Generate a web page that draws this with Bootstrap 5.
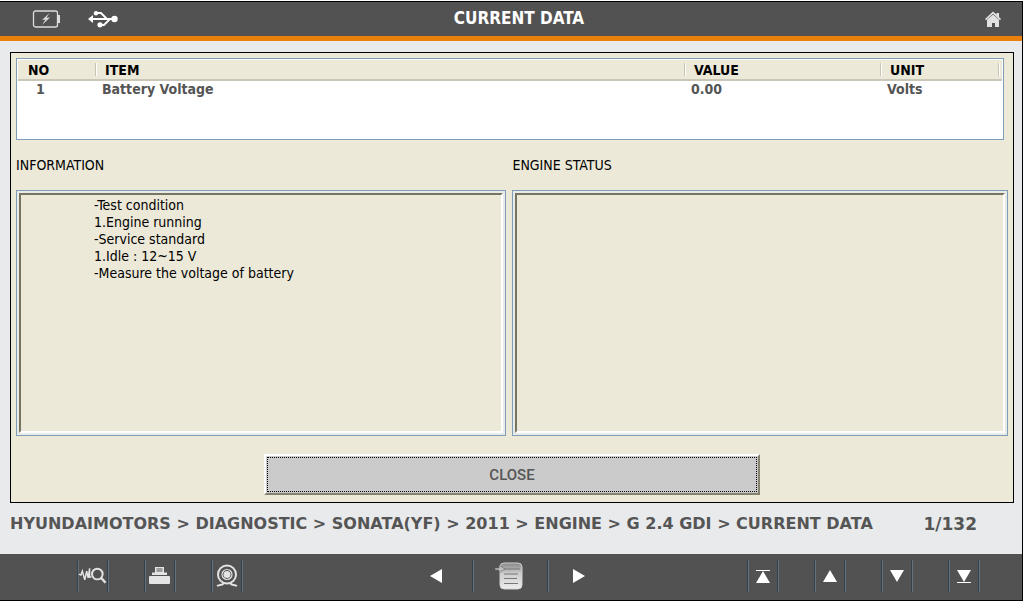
<!DOCTYPE html>
<html lang="en">
<head>
<meta charset="utf-8">
<meta name="viewport" content="width=device-width, initial-scale=1">
<title>Current Data</title>
<link href="https://cdn.jsdelivr.net/npm/bootstrap@5.3.0/dist/css/bootstrap.min.css" rel="stylesheet">
<style>
  :root { --bar: #525252; --sand: #ece9d8; --ink: #555; }
  body { background: #fff; font-family: "DejaVu Sans Condensed", "DejaVu Sans", sans-serif; font-size: 14px; line-height: 17px; color: #000; }
  .app-window { background: #e9eaec; border: solid #000; border-width: 1px 1px 1px 0; margin: 1px 1px 0 0; min-height: calc(100vh - 1px); }
  .title-bar { background: var(--bar); border-bottom: 5px solid #ea7f0b; height: 39px; padding: 0 20px 0 32px; }
  .three-part { display: grid; grid-template-columns: 1fr auto 1fr; align-items: center; }
  .title-bar h1 { font-size: 17px; line-height: 20px; color: #fff; padding: 0 0 3px 4px; }
  .main-panel { background: var(--sand); border: 1px solid #000; margin: 11px 8px 0 10px; padding: 5px 5px 7px; }
  .data-box { background: #fff; border: 1px solid #7f9db9; height: 82px; margin-right: 4px; padding: 1px; }
  .data-grid { table-layout: fixed; font-weight: bold; color: var(--ink); }
  .data-grid th { position: relative; background: var(--sand); color: #000; height: 20px; padding: 1px 10px 0; border-bottom: 2px solid #cbc7b8; }
  .data-grid th + th::before { content: ""; position: absolute; left: 0; top: 3px; height: 13px; border-left: 1px solid #c7c5b2; border-right: 1px solid #fff; }
  .data-grid td { padding: 0 7px; }
  .data-grid td:first-child { padding-left: 18px; }
  .col-no { width: 77px; } .col-value { width: 196px; } .col-unit { width: 118px; } .col-end { width: 4px; }
  .status-grid { display: grid; grid-template-columns: 98fr 99fr; gap: 6px; }
  .section-title { font-size: 14px; line-height: 18px; margin: 16px 0; }
  .sunken { border: 1px solid #7f9db9; padding: 2px; background: #e9ece6; }
  .sunken > div { background: var(--sand); border: 2px solid; border-color: #77755f #fff #fff #77755f; padding: 2px 8px 2px 73px; }
  .close-btn { width: 496px; max-width: 100%; height: 41px; margin-top: 18px; padding: 1px; border: 2px solid; border-color: #fff #85826f #85826f #fff; background: #cbcbcb; color: var(--ink); font: 500 15px Roboto, sans-serif; }
  .close-btn span { display: flex; align-items: center; justify-content: center; height: 100%; border: 1px dotted #000; }
  .trail { font: bold 16px/20px "DejaVu Sans", sans-serif; color: var(--ink); padding: 11px 45px 20px 10px; }
  .trail .count { font-size: 17px; }
  .tool-bar { background: var(--bar); height: 46px; padding-bottom: 2px; }
  .tool-bar button { background: none; border: 0; padding: 0; height: 32px; display: grid; place-items: center; }
  .tool-bar .ruled { border: solid #34424d; border-width: 0 1px; box-shadow: inset 1px 0 #66717a, 1px 0 #66717a; }
  .tool { width: 31px; }
  .tools { gap: 36px; }
  .tools-left { padding-left: 77px; }
  .tools-right { padding-right: 43px; }
  .pager { margin-right: 12px; }
  .prev-page { width: 72px; }
  .next-page { width: 62px; }
  .note { width: 76px; }
  svg { display: block; }
</style>
</head>
<body>
<div class="app-window d-flex flex-column">
  <header class="title-bar three-part">
    <div class="d-flex align-items-center">
      <svg width="28" height="18" viewBox="0 0 28 18" fill="none" stroke="#ddd" role="img" aria-label="Battery"><rect x="1.5" y="1" width="24" height="16" rx="2" stroke-width="1.3"/><path d="M27 5v8" stroke-width="2"/><path d="M17.500 3l-7.500 7 3.500-.5-3.500 5.500 8-7.500-3.500.3z" fill="#ddd" stroke="none"/></svg>
      <svg class="ms-4 ps-1" width="34" height="18" viewBox="0 0 30 18" role="img" aria-label="USB" fill="none" stroke="#fff" stroke-width="1.800"><path d="M3 9h23M8 3h5l6 6M12 15h4l6-6"/><path d="M0 9l5-4v8z" fill="#fff" stroke="none"/><g fill="#fff" stroke="none"><circle cx="26.500" cy="9" r="3.200"/><circle cx="8" cy="3.200" r="2.200"/><circle cx="12" cy="14.800" r="2.600"/></g></svg>
    </div>
    <h1 class="fw-bold mb-0">CURRENT DATA</h1>
    <a href="#" class="ms-auto" aria-label="Home"><svg width="18" height="18" viewBox="0 0 18 18" fill="#e2e2e2"><path d="M1 9L9 1.500l3.500 3V3H15v4l2 2-1 1.200-7-6.400-7 6.400z"/><path d="M3 9.800l6-5.300 6 5.300V17h-4v-4H8v4H3z"/></svg></a>
  </header>

  <main class="main-panel flex-grow-1 d-flex flex-column">
    <div class="data-box">
      <table class="data-grid w-100">
        <colgroup><col class="col-no"><col><col class="col-value"><col class="col-unit"><col class="col-end"></colgroup>
        <thead><tr><th>NO</th><th>ITEM</th><th>VALUE</th><th>UNIT</th><th class="px-0"></th></tr></thead>
        <tbody><tr><td>1</td><td>Battery Voltage</td><td>0.00</td><td>Volts</td><td class="p-0"></td></tr></tbody>
      </table>
    </div>
    <div class="status-grid flex-grow-1">
      <section class="d-flex flex-column">
        <h2 class="section-title fw-normal">INFORMATION</h2>
        <div class="sunken flex-grow-1 d-flex"><div class="flex-grow-1">-Test condition<br>1.Engine running<br>-Service standard<br>1.Idle : 12~15 V<br>-Measure the voltage of battery</div></div>
      </section>
      <section class="d-flex flex-column">
        <h2 class="section-title fw-normal">ENGINE STATUS</h2>
        <div class="sunken flex-grow-1 d-flex"><div class="flex-grow-1"></div></div>
      </section>
    </div>
    <button type="button" class="close-btn align-self-center"><span>CLOSE</span></button>
  </main>

  <div class="trail d-flex justify-content-between">
    <nav aria-label="Breadcrumb">HYUNDAIMOTORS &gt; DIAGNOSTIC &gt; SONATA(YF) &gt; 2011 &gt; ENGINE &gt; G 2.4 GDI &gt; CURRENT DATA</nav>
    <span class="count">1/132</span>
  </div>

  <footer class="tool-bar three-part">
    <div class="tools tools-left d-flex">
      <button type="button" class="tool ruled" aria-label="Analyse"><svg width="29" height="20" viewBox="0 0 30 20" fill="none" stroke="#e4e4e4" stroke-width="1.500"><path d="M1 8l2 1 1.500-4L7 14l2-9 1.500 7L12 2v9h2"/><circle cx="20" cy="8" r="5.500" stroke-width="2"/><path d="M24 12l4.500 5" stroke-width="2.500"/></svg></button>
      <button type="button" class="tool ruled" aria-label="Print"><svg width="21" height="20" viewBox="0 0 21 20" fill="#e4e4e4"><path d="M6 1h9v6H6z"/><path d="M7.500 3h6M7.500 5h6" stroke="#525252"/><path d="M3 6.500h15V9H3z"/><rect x="0" y="10" width="21" height="8" rx="1"/></svg></button>
      <button type="button" class="tool ruled" aria-label="Camera"><svg width="24" height="24" viewBox="0 0 24 24" fill="none" stroke="#e4e4e4" stroke-width="2"><circle cx="12" cy="10.500" r="9"/><circle cx="12" cy="10.500" r="5" stroke-width="1.200"/><circle cx="12" cy="10.500" r="3.500" fill="#e4e4e4" stroke="none"/><path d="M2 22c3-2 5 0 7-3M22 22c-3-2-5 0-7-3"/></svg></button>
    </div>
    <div class="pager d-flex">
      <button type="button" class="prev-page" aria-label="Previous"><svg width="12" height="14" fill="#fff"><path d="M12 0v14L0 7z"/></svg></button>
      <button type="button" class="note ruled" aria-label="Notes"><svg width="30" height="30" viewBox="0 0 30 30"><defs><linearGradient id="sheet" x2="0" y2="1"><stop stop-color="#888"/><stop offset=".4" stop-color="#ccc"/><stop offset="1" stop-color="#eee"/></linearGradient></defs><rect x="5" y="2" width="22" height="26" rx="4" fill="url(#sheet)" stroke="#d0d0d0"/><path d="M9 8h16M9 13h14M9 17.500h13M9 22.500h14" stroke="#777"/><path d="M0 7h4V4l6 4-6 4V9H0z" fill="#bbb" stroke="#666" stroke-width=".6"/></svg></button>
      <button type="button" class="next-page" aria-label="Next"><svg width="12" height="14" fill="#fff"><path d="M0 0v14l12-7z"/></svg></button>
    </div>
    <div class="tools tools-right d-flex justify-content-end">
      <button type="button" class="tool ruled" aria-label="First"><svg width="14" height="13" fill="#fff"><path d="M0 0h14v1H0zM7 1l7 12H0z"/></svg></button>
      <button type="button" class="tool ruled" aria-label="Up"><svg width="14" height="12" fill="#fff"><path d="M7 0l7 12H0z"/></svg></button>
      <button type="button" class="tool ruled" aria-label="Down"><svg width="14" height="12" fill="#fff"><path d="M0 0h14L7 12z"/></svg></button>
      <button type="button" class="tool ruled" aria-label="Last"><svg width="14" height="13" fill="#fff"><path d="M0 0h14L7 12zM0 12h14v1H0z"/></svg></button>
    </div>
  </footer>
</div>
<script src="https://cdn.jsdelivr.net/npm/bootstrap@5.3.0/dist/js/bootstrap.bundle.min.js"></script>
</body>
</html>
